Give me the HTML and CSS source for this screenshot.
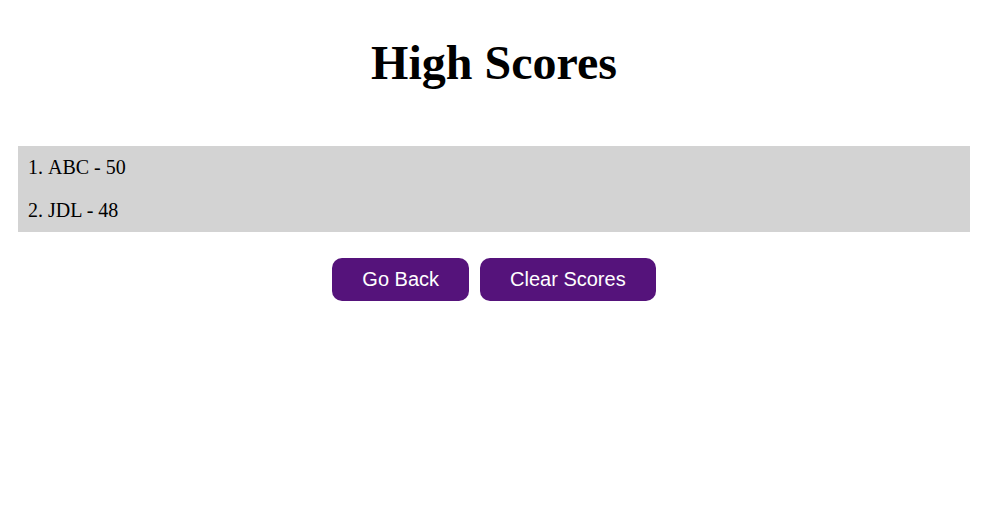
FILE: index.html
```html
<!DOCTYPE html>
<html lang="en">
<head>
<meta charset="utf-8">
<title>High Scores</title>
<link rel="stylesheet" href="styles.css">
</head>
<body>
<main class="page">
  <h1 class="title">High Scores</h1>
  <ol class="scores">
    <li class="score">ABC - 50</li>
    <li class="score">JDL - 48</li>
  </ol>
  <div class="actions">
    <button class="btn" type="button">Go Back</button>
    <button class="btn" type="button">Clear Scores</button>
  </div>
</main>
</body>
</html>
```

FILE: styles.css
```css
html, body {
  margin: 0;
  padding: 0;
  background: #ffffff;
}

body {
  font-family: "Liberation Serif", "Times New Roman", serif;
  color: #000000;
}

.page {
  width: 952px;
  margin: 0 0 0 18px;
  padding-top: 35px;
}

.title {
  margin: 0;
  font-size: 48px;
  font-weight: bold;
  text-align: center;
  line-height: normal;
}

.scores {
  margin: 56px 0 0 0;
  padding: 0;
  list-style-position: inside;
  background: #d3d3d3;
}

.score {
  font-size: 20px;
  line-height: 23px;
  padding: 10px;
}

.actions {
  display: flex;
  justify-content: center;
  gap: 11px;
  margin-top: 26px;
}

.btn {
  font-family: "Liberation Sans", Arial, sans-serif;
  font-size: 20px;
  line-height: 23px;
  padding: 10px 30px;
  color: #ffffff;
  background: #55137b;
  border: none;
  border-radius: 10px;
}
```
